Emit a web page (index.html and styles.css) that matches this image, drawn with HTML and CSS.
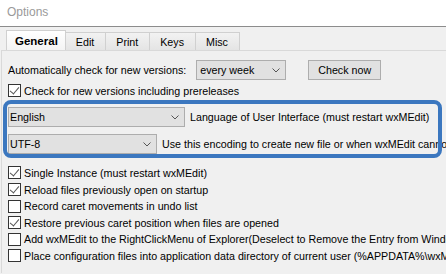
FILE: index.html
```html
<!DOCTYPE html>
<html lang="en">
<head>
    <meta charset="UTF-8">
    <title>Options</title>
    <link rel="stylesheet" href="styles.css">
</head>
<body>
    <div class="titlebar">Options</div>

    <div class="notebook">
        <div class="tabs">
            <div class="tab active">General</div>
            <div class="tab">Edit</div>
            <div class="tab">Print</div>
            <div class="tab">Keys</div>
            <div class="tab">Misc</div>
        </div>

        <div class="page">
            <div class="row">
                <span>Automatically check for new versions:</span>
                <div class="combo combo-freq">every week
                    <svg class="chevron" width="8" height="5" viewBox="0 0 8 5"><polyline points="0.5,0.5 4,4 7.5,0.5" fill="none" stroke="#555" stroke-width="1"/></svg>
                </div>
                <div class="button">Check now</div>
            </div>

            <div class="check check-first"><span class="box checked"></span>Check for new versions including prereleases</div>

            <div class="annotated">
                <div class="row">
                    <div class="combo combo-lang">English
                        <svg class="chevron" width="8" height="5" viewBox="0 0 8 5"><polyline points="0.5,0.5 4,4 7.5,0.5" fill="none" stroke="#555" stroke-width="1"/></svg>
                    </div>
                    <span class="label">Language of User Interface (must restart wxMEdit)</span>
                </div>
                <div class="row row-enc">
                    <div class="combo combo-enc">UTF-8
                        <svg class="chevron" width="8" height="5" viewBox="0 0 8 5"><polyline points="0.5,0.5 4,4 7.5,0.5" fill="none" stroke="#555" stroke-width="1"/></svg>
                    </div>
                    <span class="label">Use this encoding to create new file or when wxMEdit cannot determine the encoding</span>
                </div>
            </div>

            <div class="check-list">
                <div class="check"><span class="box checked"></span>Single Instance (must restart wxMEdit)</div>
                <div class="check"><span class="box checked"></span>Reload files previously open on startup</div>
                <div class="check"><span class="box"></span>Record caret movements in undo list</div>
                <div class="check"><span class="box checked"></span>Restore previous caret position when files are opened</div>
                <div class="check"><span class="box"></span>Add wxMEdit to the RightClickMenu of Explorer(Deselect to Remove the Entry from Windows System)</div>
                <div class="check"><span class="box"></span>Place configuration files into application data directory of current user (%APPDATA%\wxMEdit)</div>
            </div>
        </div>
    </div>
</body>
</html>
```

FILE: styles.css
```css
body {
    margin: 0;
    width: 446px;
    height: 274px;
    overflow: hidden;
    background-color: #f0f0f0;
    font-family: "Liberation Sans", Arial, sans-serif;
    font-size: 10.7px;
    color: #000;
}

.titlebar {
    height: 27px;
    box-sizing: border-box;
    padding: 5px 0 0 7px;
    background-color: #fff;
    border-bottom: 1px solid #8c8c8c;
    color: #9a9a9a;
    font-size: 12px;
}

.notebook {
    margin: 3px 0 0 1px;
}

.tabs {
    display: flex;
    align-items: flex-end;
    padding-left: 5px;
    height: 20px;
}

.tab {
    height: 18px;
    box-sizing: border-box;
    padding: 3px 11px 0 10px;
    border: 1px solid #d0d0d0;
    border-bottom: none;
    border-left: none;
    background: linear-gradient(#f2f2f2, #e4e4e4);
}

.tab.active {
    height: 20px;
    padding: 4px 7px 0 8px;
    border-left: 1px solid #d0d0d0;
    background: linear-gradient(#fff, #f4f4f4);
    font-weight: bold;
    font-size: 11.5px;
}

.page {
    height: 213px;
    padding: 9px 0 0 6px;
    border-top: 1px solid #d9d9d9;
    border-left: 1px solid #d9d9d9;
    white-space: nowrap;
    overflow: hidden;
}

.row {
    display: flex;
    align-items: center;
    height: 20px;
}

.combo {
    position: relative;
    flex-shrink: 0;
    height: 20px;
    box-sizing: border-box;
    padding: 3px 0 0 3px;
    background-color: #e1e1e1;
    border: 1px solid #adadad;
}

.combo-freq {
    width: 90px;
    margin-left: 10px;
}

.combo-lang {
    width: 177px;
    padding-left: 1px;
}

.combo-enc {
    width: 149px;
    padding-left: 1px;
}

.chevron {
    position: absolute;
    right: 5px;
    top: 7px;
}

.button {
    flex-shrink: 0;
    width: 73px;
    height: 20px;
    box-sizing: border-box;
    margin-left: 22px;
    padding-top: 3px;
    text-align: center;
    background-color: #e1e1e1;
    border: 1px solid #adadad;
}

.label {
    margin-left: 5px;
}

.annotated {
    position: relative;
    margin-top: 8px;
}

.annotated::after {
    content: "";
    position: absolute;
    top: -7px;
    bottom: -4px;
    left: -5px;
    right: 4px;
    border: 4px solid #3b77bf;
    border-radius: 8px;
}

.row-enc {
    margin-top: 7px;
}

.check {
    display: flex;
    align-items: center;
    height: 16.6px;
}

.check-first {
    margin-top: 2px;
    height: 17px;
}

.check-list {
    margin-top: 10.7px;
}

.box {
    position: relative;
    flex-shrink: 0;
    width: 13px;
    height: 13px;
    box-sizing: border-box;
    margin-right: 3px;
    background-color: #fff;
    border: 1px solid #333;
}

.box.checked::after {
    content: "";
    position: absolute;
    left: 3px;
    top: 0;
    width: 4px;
    height: 8px;
    border-right: 1px solid #555;
    border-bottom: 1px solid #555;
    transform: rotate(40deg);
}
```
